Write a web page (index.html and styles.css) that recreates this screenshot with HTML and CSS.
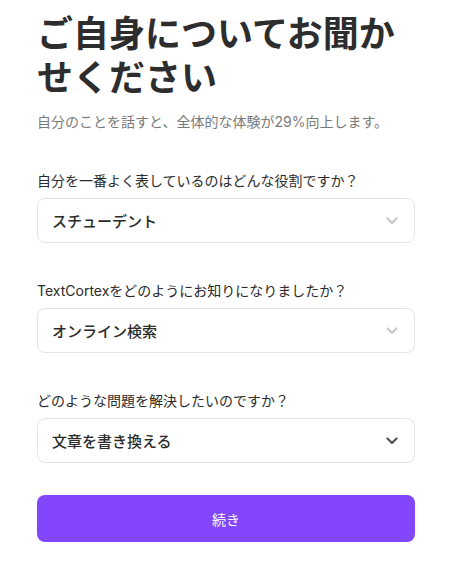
FILE: index.html
```
<!DOCTYPE html>
<html lang="ja">
<head>
<meta charset="utf-8">
<link rel="stylesheet" href="styles.css">
</head>
<body>
<main class="page">
  <h1 class="title">ご自身についてお聞かせください</h1>
  <p class="subtitle">自分のことを話すと、全体的な体験が29%向上します。</p>

  <div class="field">
    <label class="label">自分を一番よく表しているのはどんな役割ですか？</label>
    <div class="select">
      <span class="value">スチューデント</span>
      <svg class="chev light" width="12" height="8" viewBox="0 0 12 8"><path d="M1.5 1.5 L6 6 L10.5 1.5" fill="none" stroke="currentColor" stroke-width="2.2" stroke-linecap="round" stroke-linejoin="round"/></svg>
    </div>
  </div>

  <div class="field">
    <label class="label">TextCortexをどのようにお知りになりましたか？</label>
    <div class="select">
      <span class="value">オンライン検索</span>
      <svg class="chev light" width="12" height="8" viewBox="0 0 12 8"><path d="M1.5 1.5 L6 6 L10.5 1.5" fill="none" stroke="currentColor" stroke-width="2.2" stroke-linecap="round" stroke-linejoin="round"/></svg>
    </div>
  </div>

  <div class="field">
    <label class="label">どのような問題を解決したいのですか？</label>
    <div class="select">
      <span class="value">文章を書き換える</span>
      <svg class="chev dark" width="12" height="8" viewBox="0 0 12 8"><path d="M1.5 1.5 L6 6 L10.5 1.5" fill="none" stroke="currentColor" stroke-width="2.2" stroke-linecap="round" stroke-linejoin="round"/></svg>
    </div>
  </div>

  <button class="btn">続き</button>
</main>
</body>
</html>
```

FILE: styles.css
```
* { box-sizing: border-box; }
html, body { margin: 0; padding: 0; background: #fff; }
body {
  font-family: Inter, "Noto Sans CJK JP", sans-serif;
  color: #2b2b2b;
}
.page {
  width: 378px;
  margin-left: 37px;
  padding-top: 12px;
  display: flex;
  flex-direction: column;
}
.title {
  margin: 0;
  font-size: 36px;
  line-height: 44px;
  font-weight: 700;
  color: #2d2d2d;
  letter-spacing: 0;
}
.subtitle {
  margin: 12px 0 0;
  font-size: 14px;
  line-height: 20px;
  color: #7a7a7a;
}
.field {
  margin-top: 39px;
  display: flex;
  flex-direction: column;
  gap: 7px;
}
.field + .field { margin-top: 38px; }
.label {
  font-size: 14px;
  line-height: 20px;
  color: #2b2b2b;
}
.select {
  height: 45px;
  border: 1px solid #e3e3e8;
  border-radius: 8px;
  display: flex;
  align-items: center;
  justify-content: space-between;
  padding: 0 16px 0 14px;
}
.value {
  font-size: 15px;
  font-weight: 500;
  color: #2b2b2b;
}
.chev.light { color: #c8c8cc; }
.chev.dark { color: #555558; }
.btn {
  margin-top: 32px;
  height: 47px;
  border: none;
  border-radius: 8px;
  background: #8446fb;
  color: #fff;
  font-family: Inter, "Noto Sans CJK JP", sans-serif;
  font-size: 14px;
}
```
